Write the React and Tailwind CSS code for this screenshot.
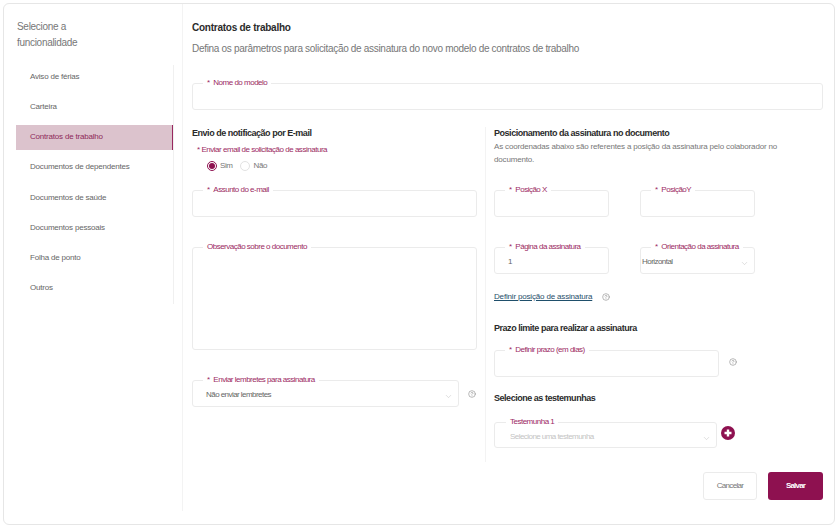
import React from 'react';
import { ChevronDown, CircleHelp } from 'lucide-react';

const menu = [
  'Aviso de férias',
  'Carteira',
  'Contratos de trabalho',
  'Documentos de dependentes',
  'Documentos de saúde',
  'Documentos pessoais',
  'Folha de ponto',
  'Outros',
];

// bordered field, the label sits in the top border
const Field = ({ label, required = true, value, placeholder, select, className = '', pad = 'pl-[13px]', legendMl = 'ml-[10px]' }) => (
  <fieldset className={`relative rounded-[3px] border border-[#ebebeb] ${className}`}>
    <legend className={`${legendMl} px-[4px] text-[8px] leading-[8px] tracking-[-0.5px] text-[#9c2a63] whitespace-nowrap`}>
      {required && <span className="mr-[2px]">* </span>}
      {label}
    </legend>
    {(value || placeholder) && (
      <div className={`${pad} pt-[6px] text-[8px] leading-[10px] tracking-[-0.55px] ${placeholder ? 'text-[#c4c4c4]' : 'text-[#666666]'}`}>
        {value || placeholder}
      </div>
    )}
    {select && <ChevronDown className="absolute right-[5px] top-[8px] h-[9px] w-[9px] text-[#c8c8c8]" strokeWidth={1.5} />}
  </fieldset>
);

const Help = ({ className = '' }) => <CircleHelp className={`h-[8px] w-[8px] text-[#888888] ${className}`} strokeWidth={1.75} />;

const Heading = ({ children, className = '' }) => (
  <h2 className={`text-[9px] leading-[12px] font-bold tracking-[-0.47px] text-[#2b2b2b] ${className}`}>{children}</h2>
);

export default function App() {
  return (
    <div className="h-[528px] w-[839px] overflow-hidden bg-white pt-[3px] pl-[3px] font-['Liberation_Sans',sans-serif]">
      <div className="flex h-[522px] w-[832px] rounded-[6px] border border-[#e6e6e6]">
        {/* Sidebar */}
        <aside className="w-[178px] shrink-0 pt-[15px] pl-[13px]">
          <p className="w-[100px] text-[10px] leading-[16px] tracking-[-0.3px] text-[#777777]">Selecione a funcionalidade</p>
          <ul className="mt-[13.5px] -ml-[1px] h-[239px] w-[158px] border-r border-[#f0f0f0]">
            {menu.map((item) => (
              <li
                key={item}
                className={`mb-[5.15px] flex h-[25px] items-center pl-[14px] text-[8px] tracking-[-0.2px] ${
                  item === 'Contratos de trabalho'
                    ? 'border-r border-[#98285f] bg-[#dcc3cd] text-[#8e2a5a]'
                    : 'text-[#666666]'
                }`}
              >
                {item}
              </li>
            ))}
          </ul>
        </aside>

        {/* Main */}
        <main className="mb-[13px] flex-1 border-l border-[#f3f3f3] pt-[17px] pl-[9px] pr-[11px]">
          <h1 className="text-[10px] leading-[14px] font-bold tracking-[-0.25px] text-[#2b2b2b]">Contratos de trabalho</h1>
          <p className="mt-[7px] text-[10px] leading-[14px] tracking-[-0.31px] text-[#777777]">
            Defina os parâmetros para solicitação de assinatura do novo modelo de contratos de trabalho
          </p>
          <Field label="Nome do modelo" className="mt-[23px] h-[31px]" />

          <div className="mt-[17px] flex">
            {/* Left column */}
            <div className="h-[335px] w-[294px] shrink-0 border-r border-[#f3f3f3] pr-[8px]">
              <Heading>Envio de notificação por E-mail</Heading>
              <p className="mt-[6px] pl-[5px] text-[8px] leading-[10px] tracking-[-0.47px] text-[#9c2a63]">* Enviar email de solicitação de assinatura</p>
              <div className="mt-[5px] flex items-center pl-[15px] text-[8px] tracking-[-0.4px] text-[#777777]">
                <span className="flex h-[10px] w-[10px] items-center justify-center rounded-full border border-[#8e1150]">
                  <span className="h-[6px] w-[6px] rounded-full bg-[#8e1150]" />
                </span>
                <span className="ml-[3px]">Sim</span>
                <span className="ml-[7px] h-[10px] w-[10px] rounded-full border border-[#e2e2e2]" />
                <span className="ml-[4px]">Não</span>
              </div>
              <Field label="Assunto do e-mail" className="mt-[14px] h-[31px]" />
              <Field label="Observação sobre o documento" required={false} className="mt-[26px] h-[107px]" />
              <div className="mt-[26px] flex items-center">
                <Field label="Enviar lembretes para assinatura" value="Não enviar lembretes" select className="h-[31px] w-[267px]" />
                <Help className="ml-[9px] mt-[4px]" />
              </div>
            </div>

            {/* Right column */}
            <div className="flex-1 pl-[8px]">
              <Heading>Posicionamento da assinatura no documento</Heading>
              <p className="mt-[1px] w-[295px] text-[8px] leading-[13px] tracking-[-0.17px] text-[#777777]">
                As coordenadas abaixo são referentes a posição da assinatura pelo colaborador no documento.
              </p>
              <div className="mt-[20px] grid w-[261px] grid-cols-[115px_115px] gap-x-[31px] gap-y-[26px]">
                <Field label="Posição X" className="h-[31px]" />
                <Field label="PosiçãoY" className="h-[31px]" />
                <Field label="Página da assinatura" value="1" className="h-[31px]" />
                <Field label="Orientação da assinatura" value="Horizontal" select pad="pl-[1px]" className="h-[31px]" />
              </div>
              <div className="mt-[16px] flex items-center">
                <a className="text-[8px] leading-[14px] tracking-[-0.17px] text-[#1f4f6b] underline">Definir posição de assinatura</a>
                <Help className="ml-[10px]" />
              </div>
              <Heading className="mt-[18px]">Prazo limite para realizar a assinatura</Heading>
              <div className="mt-[12px] flex items-center">
                <Field label="Definir prazo (em dias)" className="h-[31px] w-[225px]" />
                <Help className="ml-[10px]" />
              </div>
              <Heading className="mt-[15px]">Selecione as testemunhas</Heading>
              <div className="mt-[14px] flex items-center">
                <Field label="Testemunha 1" required={false} placeholder="Selecione uma testemunha" select pad="pl-[15px]" legendMl="ml-[11px]" className="h-[30px] w-[223px]" />
                <svg viewBox="0 0 14 14" className="ml-[4px] h-[14px] w-[14px]">
                  <circle cx="7" cy="7" r="7" fill="#8e1150" />
                  <path d="M7 3.5v7M3.5 7h7" stroke="#ffffff" strokeWidth="2.4" />
                </svg>
              </div>
              <div className="mt-[24px] flex justify-end gap-[11px]">
                <button className="h-[28px] w-[54px] rounded-[3px] border border-[#ebebeb] text-[8px] tracking-[-0.7px] text-[#777777]">Cancelar</button>
                <button className="h-[28px] w-[55px] rounded-[3px] bg-[#8e1150] text-[8px] font-bold tracking-[-0.8px] text-white">Salvar</button>
              </div>
            </div>
          </div>
        </main>
      </div>
    </div>
  );
}
